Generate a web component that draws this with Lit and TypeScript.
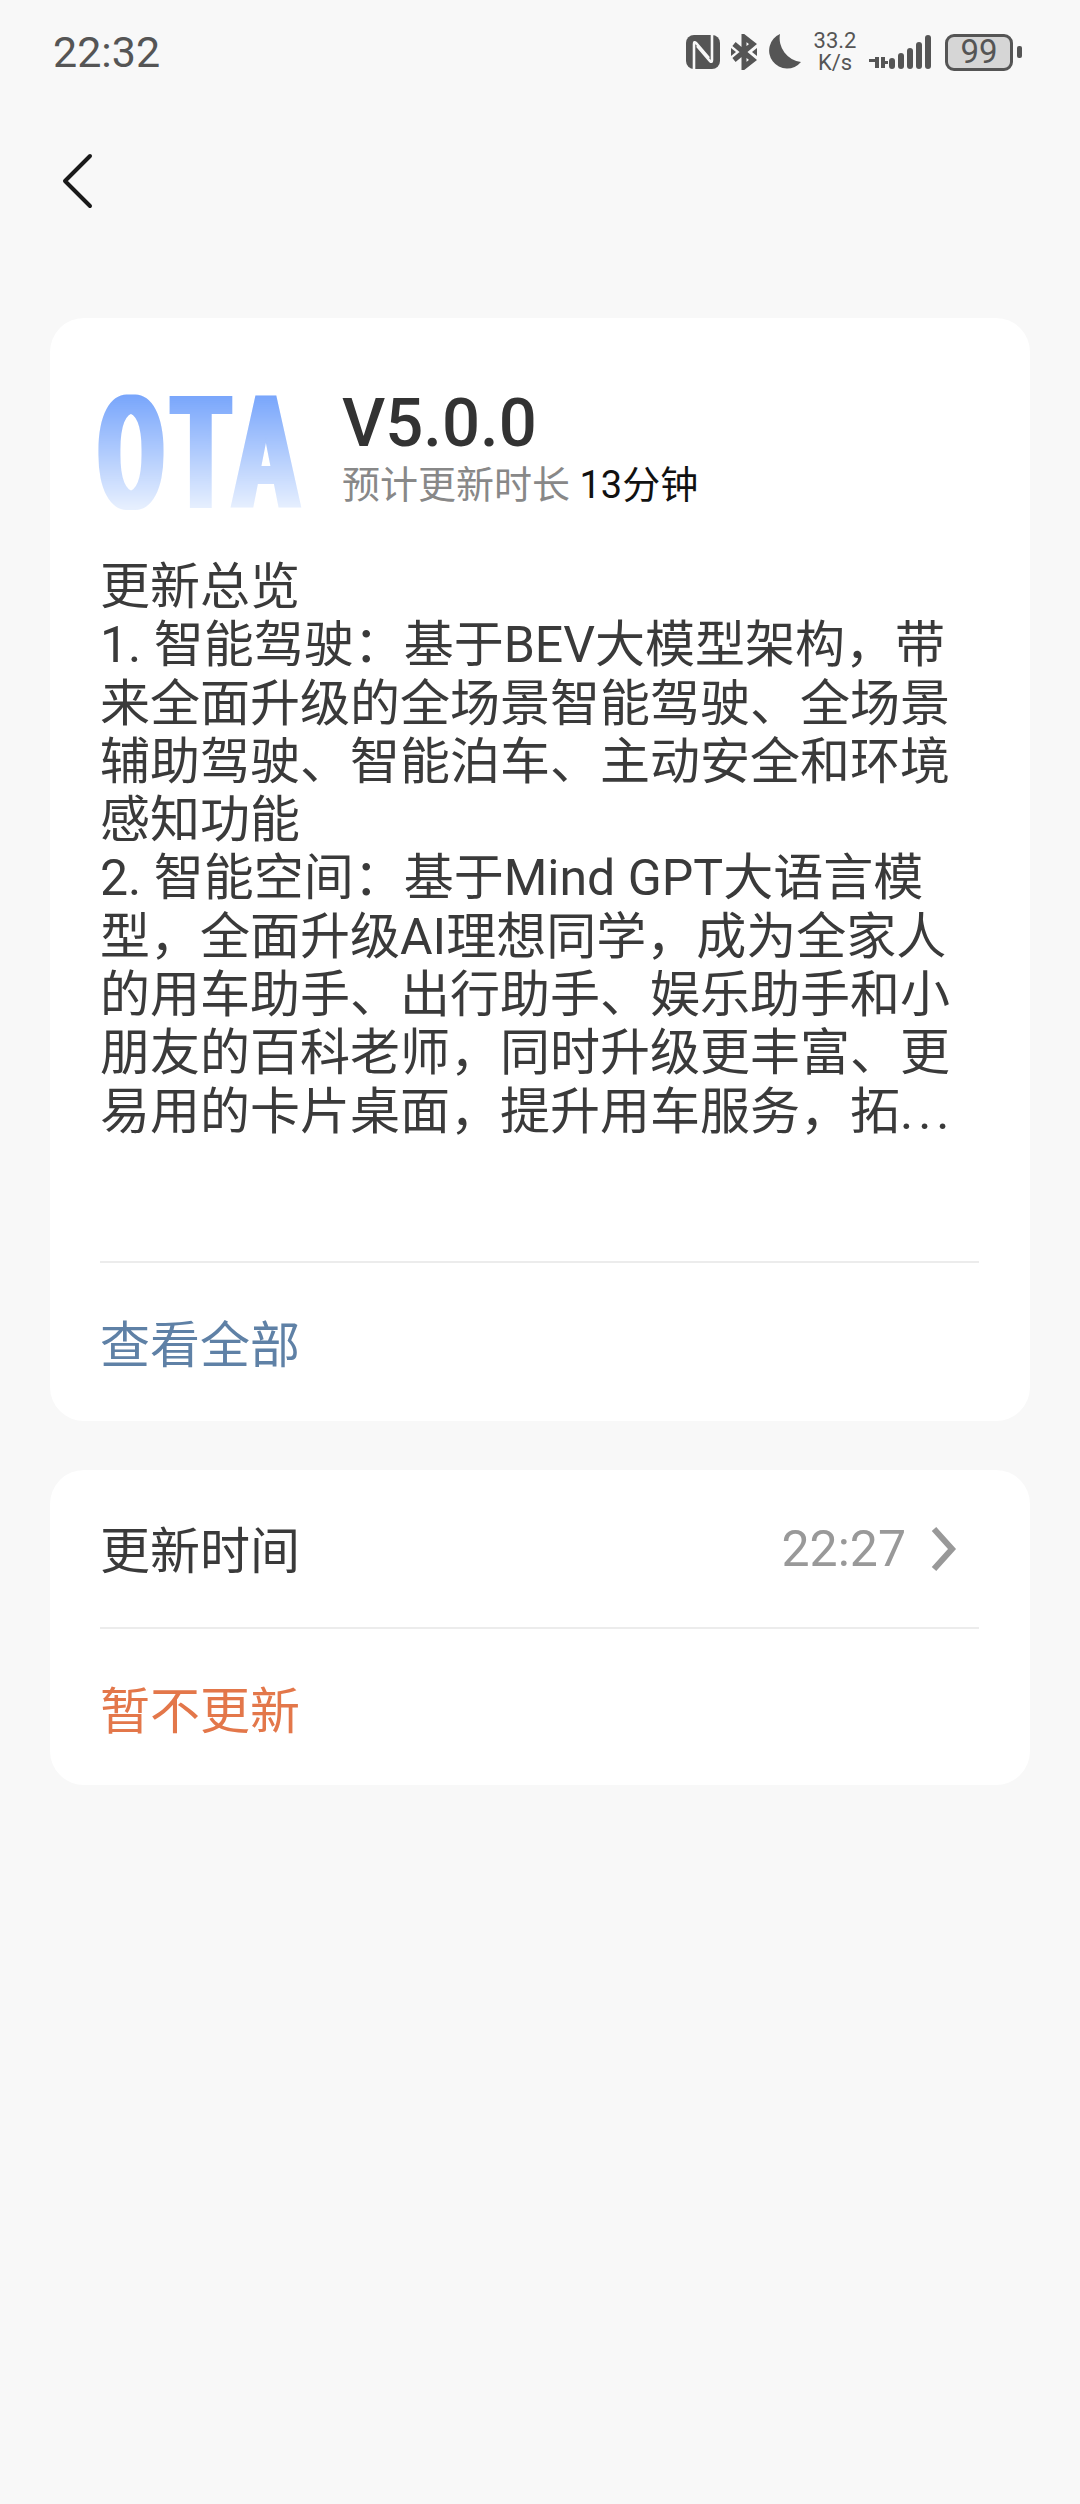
import { LitElement, html, css } from 'lit';
import { customElement } from 'lit/decorators.js';

const SUMMARY = [
  '更新总览',
  '1. 智能驾驶：基于BEV大模型架构，带',
  '来全面升级的全场景智能驾驶、全场景',
  '辅助驾驶、智能泊车、主动安全和环境',
  '感知功能',
  '2. 智能空间：基于Mind GPT大语言模',
  '型，全面升级AI理想同学，成为全家人',
  '的用车助手、出行助手、娱乐助手和小',
  '朋友的百科老师，同时升级更丰富、更',
];

@customElement('app-root')
export class AppRoot extends LitElement {
  static styles = css`
    :host {
      display: block;
      width: 1080px;
      height: 2504px;
      background: #f8f8f8;
      font-family: Roboto, 'Noto Sans CJK SC', sans-serif;
      color: #333;
      overflow: hidden;
    }
    .status {
      height: 104px;
      box-sizing: border-box;
      padding: 0 58px 0 53px;
      display: flex;
      align-items: center;
      justify-content: space-between;
    }
    .time {
      font-size: 43px;
      color: #555;
    }
    .status-icons {
      display: flex;
      align-items: center;
      color: #555;
    }
    .speed {
      width: 46px;
      margin: 0 11px 0 11px;
      font-size: 22px;
      line-height: 22px;
      text-align: center;
    }
    .battery {
      width: 68px;
      height: 37px;
      box-sizing: border-box;
      margin-left: 14px;
      border: 3px solid #555;
      border-radius: 9px;
      background: #d6d6d6;
      font-size: 33px;
      line-height: 30px;
      text-align: center;
    }
    .nub {
      width: 5px;
      height: 12px;
      margin-left: 4px;
      border-radius: 2px;
      background: #555;
    }
    .nav {
      height: 214px;
      padding-left: 62px;
    }
    .back {
      display: block;
      padding-top: 49px;
    }
    .card {
      margin: 0 50px 49px 50px;
      padding: 0 51px 0 50px;
      background: #fff;
      border-radius: 34px;
    }
    .head {
      display: flex;
      padding-top: 74px;
      height: 166px;
    }
    .logo-box {
      width: 242px;
      height: 120px;
      flex: none;
    }
    .logo {
      display: block;
      margin: -4px 0 0 -5px;
      overflow: visible;
    }
    .logo text {
      font-family: Roboto, sans-serif;
      font-size: 157px;
      font-weight: 700;
    }
    .version {
      font-size: 67px;
      line-height: 62px;
      font-weight: 500;
      color: #333;
    }
    .eta {
      margin-top: 6px;
      font-size: 38px;
      line-height: 50px;
      color: #888;
    }
    .eta b {
      font-weight: 400;
      color: #111;
    }
    .summary {
      height: 705px;
      font-size: 50px;
      line-height: 58.3px;
      color: #3a3a3a;
      border-bottom: 2px solid #ececec;
      box-sizing: border-box;
      white-space: nowrap;
    }
    .dots {
      letter-spacing: 5px;
    }
    .row {
      display: flex;
      align-items: center;
      justify-content: space-between;
      box-sizing: border-box;
      font-size: 50px;
    }
    .all {
      height: 158px;
      padding-bottom: 2px;
      color: #5f81a6;
    }
    .when {
      height: 159px;
      padding-bottom: 4px;
      color: #3a3a3a;
      border-bottom: 2px solid #ececec;
    }
    .later {
      height: 156px;
      color: #e3774a;
    }
    .value {
      display: flex;
      align-items: center;
      gap: 25px;
      margin: 4px 22px 0 0;
      font-size: 50px;
      color: #999;
    }
  `;

  render() {
    return html`
      <div class="status">
        <span class="time">22:32</span>
        <div class="status-icons">
          <svg width="34" height="34" viewBox="0 0 34 34">
            <rect width="34" height="34" rx="8" fill="#555"/>
            <path fill="none" stroke="#f8f8f8" stroke-width="2.6" d="M8 34V9q0-3 2-1l13 15M26 0v25q0 3-2 1L11 11"/>
          </svg>
          <svg style="margin-left:11px" width="26" height="36" viewBox="0 0 26 36">
            <path fill="none" stroke="#555" stroke-width="5" d="M3 10 22 26 13 33V3l9 7L3 26"/>
            <path fill="#555" d="M0 14l5 4-5 4ZM26 14l-5 4 5 4Z"/>
          </svg>
          <svg style="margin-left:10px" width="34" height="36" viewBox="0 0 34 36">
            <path fill="#555" d="M13 0a24 24 0 0 0 21 28A18 18 0 1 1 13 0Z"/>
          </svg>
          <div class="speed">33.2<br />K/s</div>
          <svg width="62" height="36" viewBox="0 0 62 36">
            <g fill="#555">
              <rect x="0" y="25" width="6" height="3"/>
              <rect x="6" y="23" width="4" height="11"/>
              <rect x="12" y="23" width="4" height="11"/>
              <rect x="15" y="27" width="4" height="3"/>
              <rect x="20" y="24" width="6" height="11" rx="3"/>
              <rect x="29" y="19" width="6" height="16" rx="3"/>
              <rect x="38" y="14" width="6" height="21" rx="3"/>
              <rect x="47" y="8" width="6" height="27" rx="3"/>
              <rect x="56" y="1" width="6" height="34" rx="3"/>
            </g>
          </svg>
          <div class="battery">99</div>
          <div class="nub"></div>
        </div>
      </div>

      <div class="nav">
        <svg class="back" width="32" height="58" viewBox="0 0 32 58">
          <path fill="none" stroke="#1a1a1a" stroke-width="4" stroke-linecap="round" stroke-linejoin="round" d="M28 3 3 28l25 25"/>
        </svg>
      </div>

      <div class="card">
        <div class="head">
          <div class="logo-box">
            <svg class="logo" width="215" height="125" viewBox="0 0 215 125">
              <defs>
                <linearGradient id="ota-fill" gradientUnits="userSpaceOnUse" x1="0" y1="5" x2="0" y2="120">
                  <stop offset="0" stop-color="#76a4fb"/>
                  <stop offset="1" stop-color="#e6effe"/>
                </linearGradient>
                <filter id="ota-fat" x="-5%" y="-5%" width="110%" height="110%">
                  <feMorphology operator="dilate" radius="4 0"/>
                </filter>
              </defs>
              <g filter="url(#ota-fat)">
                <text fill="url(#ota-fill)" y="120" transform="scale(0.6 1)" x="6 128 232">OTA</text>
              </g>
            </svg>
          </div>
          <div>
            <div class="version">V5.0.0</div>
            <div class="eta">预计更新时长 <b>13分钟</b></div>
          </div>
        </div>
        <div class="summary">
          ${SUMMARY.map((line) => html`<div>${line}</div>`)}
          <div>易用的卡片桌面，提升用车服务，拓<span class="dots">...</span></div>
        </div>
        <div class="row all">查看全部</div>
      </div>

      <div class="card">
        <div class="row when">
          <span>更新时间</span>
          <span class="value">
            22:27
            <svg width="26" height="46" viewBox="0 0 26 46">
              <path fill="none" stroke="#999" stroke-width="6" stroke-linejoin="miter" d="M3 3l18 20L3 43"/>
            </svg>
          </span>
        </div>
        <div class="row later">暂不更新</div>
      </div>
    `;
  }
}
